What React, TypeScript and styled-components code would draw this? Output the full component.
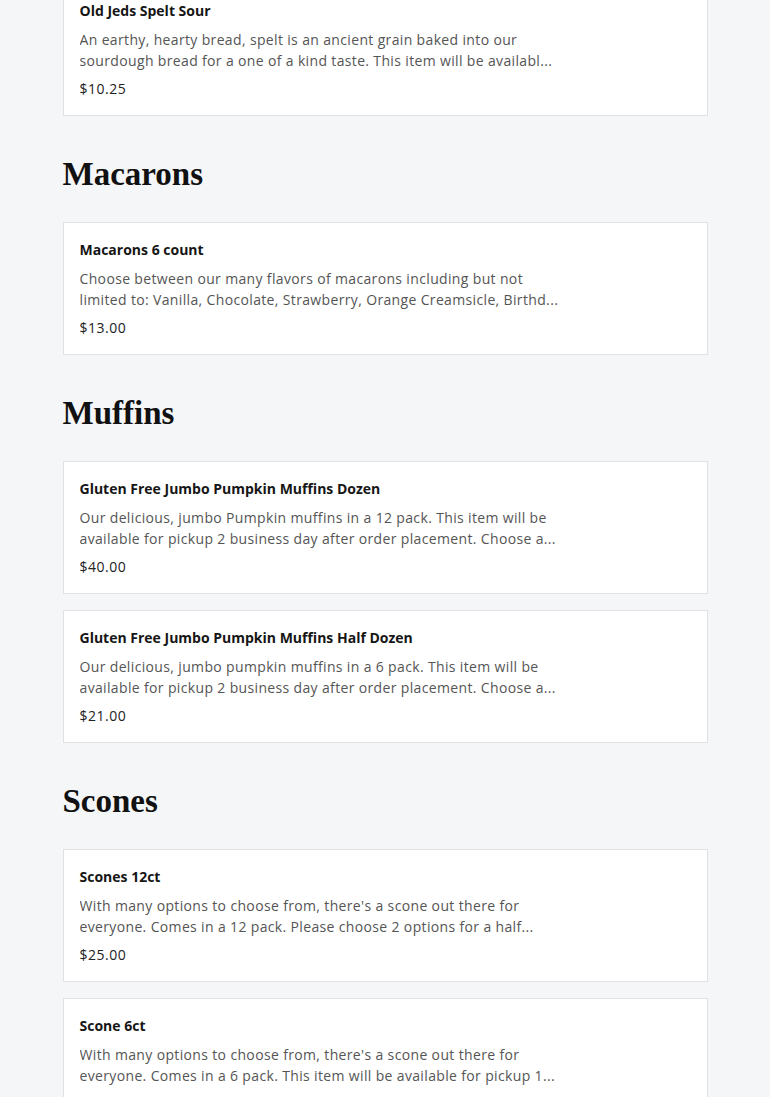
import React from 'react';
import styled, { createGlobalStyle } from 'styled-components';

const GlobalStyle = createGlobalStyle`
  html, body {
    margin: 0;
    padding: 0;
    background: #f5f6f8;
  }
  body {
    font-family: 'Open Sans', 'Liberation Sans', sans-serif;
    -webkit-font-smoothing: antialiased;
  }
`;

const Page = styled.div`
  width: 645px;
  margin: -17px auto 0;
  display: flex;
  flex-direction: column;
`;

const Section = styled.section`
  display: flex;
  flex-direction: column;
  gap: 16px;
  & + & {
    margin-top: 38px;
  }
`;

const Heading = styled.h2`
  margin: 0 0 12px;
  font-family: 'Liberation Serif', 'Times New Roman', serif;
  font-size: 33px;
  line-height: 40px;
  font-weight: 700;
  color: #111;
`;

const Card = styled.div`
  background: #fff;
  border: 1px solid #dfe1e5;
  padding: 17px 16px 16px;
  display: flex;
  flex-direction: column;
`;

const Title = styled.div`
  font-size: 14px;
  line-height: 20px;
  font-weight: 700;
  color: #161616;
`;

const Description = styled.div`
  margin-top: 8px;
  width: 490px;
  font-size: 14px;
  line-height: 21px;
  letter-spacing: 0.35px;
  color: #555;
`;

const Line = styled.div`
  white-space: nowrap;
  overflow: hidden;
`;

const Price = styled.div`
  margin-top: 8px;
  font-size: 14px;
  line-height: 20px;
  letter-spacing: 0.5px;
  color: #222;
`;

type Item = { name: string; lines: [string, string]; price: string };
type Group = { title?: string; items: Item[] };

const menu: Group[] = [
  {
    items: [
      {
        name: 'Old Jeds Spelt Sour',
        lines: [
          'An earthy, hearty bread, spelt is an ancient grain baked into our',
          'sourdough bread for a one of a kind taste. This item will be availabl...',
        ],
        price: '$10.25',
      },
    ],
  },
  {
    title: 'Macarons',
    items: [
      {
        name: 'Macarons 6 count',
        lines: [
          'Choose between our many flavors of macarons including but not',
          'limited to: Vanilla, Chocolate, Strawberry, Orange Creamsicle, Birthd...',
        ],
        price: '$13.00',
      },
    ],
  },
  {
    title: 'Muffins',
    items: [
      {
        name: 'Gluten Free Jumbo Pumpkin Muffins Dozen',
        lines: [
          'Our delicious, jumbo Pumpkin muffins in a 12 pack. This item will be',
          'available for pickup 2 business day after order placement. Choose a...',
        ],
        price: '$40.00',
      },
      {
        name: 'Gluten Free Jumbo Pumpkin Muffins Half Dozen',
        lines: [
          'Our delicious, jumbo pumpkin muffins in a 6 pack. This item will be',
          'available for pickup 2 business day after order placement. Choose a...',
        ],
        price: '$21.00',
      },
    ],
  },
  {
    title: 'Scones',
    items: [
      {
        name: 'Scones 12ct',
        lines: [
          "With many options to choose from, there's a scone out there for",
          'everyone. Comes in a 12 pack. Please choose 2 options for a half...',
        ],
        price: '$25.00',
      },
      {
        name: 'Scone 6ct',
        lines: [
          "With many options to choose from, there's a scone out there for",
          'everyone. Comes in a 6 pack. This item will be available for pickup 1...',
        ],
        price: '$14.00',
      },
    ],
  },
];

const App = () => (
  <>
    <GlobalStyle />
    <Page>
      {menu.map((group, gi) => (
        <Section key={gi}>
          {group.title && <Heading>{group.title}</Heading>}
          {group.items.map((item) => (
            <Card key={item.name}>
              <Title>{item.name}</Title>
              <Description>
                <Line>{item.lines[0]}</Line>
                <Line>{item.lines[1]}</Line>
              </Description>
              <Price>{item.price}</Price>
            </Card>
          ))}
        </Section>
      ))}
    </Page>
  </>
);

export default App;
